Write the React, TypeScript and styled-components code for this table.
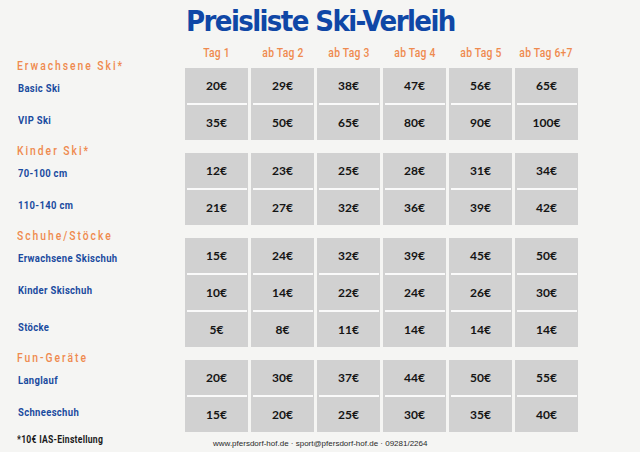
import React from "react";
import styled, { createGlobalStyle } from "styled-components";

const GlobalStyle = createGlobalStyle`
    html, body {
        margin: 0;
        padding: 0;
        background: #f5f5f3;
    }
`;

type SectionT = {
    title: string;
    rows: { label: string; prices: string[] }[];
};

const days = ["Tag 1", "ab Tag 2", "ab Tag 3", "ab Tag 4", "ab Tag 5", "ab Tag 6+7"];

const sections: SectionT[] = [
    {
        title: "Erwachsene Ski*",
        rows: [
            { label: "Basic Ski", prices: ["20€", "29€", "38€", "47€", "56€", "65€"] },
            { label: "VIP Ski", prices: ["35€", "50€", "65€", "80€", "90€", "100€"] },
        ],
    },
    {
        title: "Kinder Ski*",
        rows: [
            { label: "70-100 cm", prices: ["12€", "23€", "25€", "28€", "31€", "34€"] },
            { label: "110-140 cm", prices: ["21€", "27€", "32€", "36€", "39€", "42€"] },
        ],
    },
    {
        title: "Schuhe/Stöcke",
        rows: [
            { label: "Erwachsene Skischuh", prices: ["15€", "24€", "32€", "39€", "45€", "50€"] },
            { label: "Kinder Skischuh", prices: ["10€", "14€", "22€", "24€", "26€", "30€"] },
            { label: "Stöcke", prices: ["5€", "8€", "11€", "14€", "14€", "14€"] },
        ],
    },
    {
        title: "Fun-Geräte",
        rows: [
            { label: "Langlauf", prices: ["20€", "30€", "37€", "44€", "50€", "55€"] },
            { label: "Schneeschuh", prices: ["15€", "20€", "25€", "30€", "35€", "40€"] },
        ],
    },
];

export default function App() {
    return (
        <Page>
            <GlobalStyle />
            <Title>Preisliste Ski-Verleih</Title>
            <DayRow>
                <span />
                {days.map((d) => (
                    <DayHead key={d}>
                        <Narrow $origin="center">{d}</Narrow>
                    </DayHead>
                ))}
            </DayRow>
            <Sections>
                {sections.map((s) => (
                    <Section key={s.title}>
                        <SectionTitle>
                            <Narrow>{s.title}</Narrow>
                        </SectionTitle>
                        <PriceGrid>
                            {s.rows.map((r, i) => (
                                <React.Fragment key={r.label}>
                                    <RowLabel $first={i === 0}>
                                        <Narrow>{r.label}</Narrow>
                                    </RowLabel>
                                    {r.prices.map((p, j) => (
                                        <PriceCell key={j} $first={i === 0}>
                                            {p}
                                        </PriceCell>
                                    ))}
                                </React.Fragment>
                            ))}
                        </PriceGrid>
                    </Section>
                ))}
            </Sections>
            <Footer>
                <Note>
                    <Narrow>*10€ IAS-Einstellung</Narrow>
                </Note>
                <Contact>www.pfersdorf-hof.de · sport@pfersdorf-hof.de · 09281/2264</Contact>
            </Footer>
        </Page>
    );
}

const labelFont = `"Roboto", "Liberation Sans", sans-serif`;

const Page = styled.div`
    width: 640px;
    height: 452px;
    overflow: hidden;
    background: #f5f5f3;
    display: flex;
    flex-direction: column;
`;

// the reference uses a condensed face; squeeze a regular one to the same widths
const Narrow = styled.span<{ $origin?: string }>`
    display: inline-block;
    transform: scaleX(0.86);
    transform-origin: ${({ $origin }) => $origin || "left"} center;
    white-space: nowrap;
`;

const Title = styled.h1`
    margin: 0;
    padding: 2px 0 0 186px;
    height: 40px;
    box-sizing: border-box;
    line-height: 38px;
    font-family: "DejaVu Sans Condensed", "DejaVu Sans", sans-serif;
    font-weight: 800;
    font-size: 29px;
    letter-spacing: -1.6px;
    color: #0f47a6;
    white-space: nowrap;
`;

const DayRow = styled.div`
    display: grid;
    grid-template-columns: 182px repeat(6, 63px);
    column-gap: 3px;
    height: 18px;
    margin-top: 4px;
    margin-bottom: 6px;
    align-items: center;
`;

const DayHead = styled.div`
    text-align: center;
    font-family: ${labelFont};
    font-weight: 500;
    font-size: 12px;
    color: #ef8a4e;
    letter-spacing: 0.3px;
`;

const Sections = styled.div`
    display: flex;
    flex-direction: column;
    gap: 13px;
`;

const Section = styled.div`
    display: flex;
    flex-direction: column;
`;

const SectionTitle = styled.div`
    height: 12px;
    margin: -8px 0 -4px 17px;
    line-height: 12px;
    font-family: ${labelFont};
    font-weight: 500;
    font-size: 12px;
    letter-spacing: 2.3px;
    color: #ef8a4e;
`;

const PriceGrid = styled.div`
    display: grid;
    grid-template-columns: 182px repeat(6, 63px);
    column-gap: 3px;
`;

const RowLabel = styled.div<{ $first: boolean }>`
    height: ${({ $first }) => ($first ? 35 : 37)}px;
    padding: ${({ $first }) => ($first ? "5px 0 0" : "0 0 2px")} 18px;
    box-sizing: border-box;
    display: flex;
    align-items: center;
    font-family: ${labelFont};
    font-weight: 700;
    font-size: 11px;
    letter-spacing: 0.4px;
    color: #1a4b9f;
`;

const PriceCell = styled.div<{ $first: boolean }>`
    height: ${({ $first }) => ($first ? 35 : 37)}px;
    padding-top: ${({ $first }) => ($first ? 0 : 2)}px;
    box-sizing: border-box;
    display: flex;
    align-items: center;
    justify-content: center;
    background: ${({ $first }) =>
        $first
            ? "#d1d1d1"
            : "linear-gradient(#fafafa, #fafafa) top center / calc(100% - 3px) 2px no-repeat, #d1d1d1"};
    font-family: "Lato", "Liberation Sans", sans-serif;
    font-weight: 700;
    font-size: 12px;
    color: #151515;
`;

const Footer = styled.div`
    display: flex;
    align-items: flex-start;
    padding: 1px 0 0 17px;
`;

const Note = styled.div`
    width: 196px;
    line-height: 14px;
    font-family: ${labelFont};
    font-weight: 700;
    font-size: 10px;
    letter-spacing: 0.3px;
    color: #1a1a1a;
`;

const Contact = styled.div`
    padding-top: 5px;
    line-height: 12px;
    font-family: "Liberation Sans", sans-serif;
    font-size: 8px;
    color: #2a2a2a;
    white-space: nowrap;
`;
